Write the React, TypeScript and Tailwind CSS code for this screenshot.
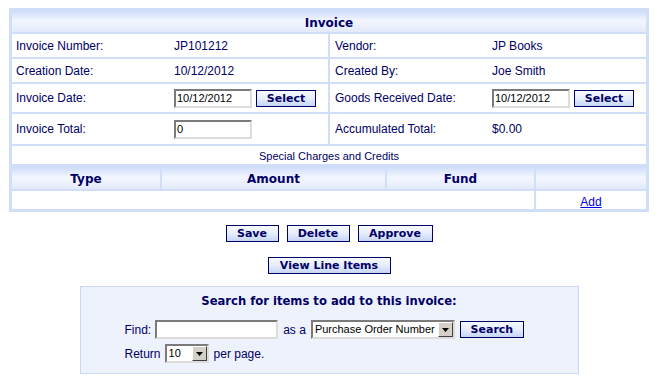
import React from "react";

const sans = { fontFamily: '"Liberation Sans", Arial, sans-serif' } as React.CSSProperties;
const bold = { fontFamily: '"DejaVu Sans", Verdana, sans-serif' } as React.CSSProperties;

function Btn({ children, w }: { children: React.ReactNode; w: string }) {
  return (
    <div
      style={bold}
      className={`${w} h-[17px] border border-[#000066] bg-gradient-to-b from-[#f7f9ff] via-[#e6edfc] to-[#c6d5f6] flex items-center justify-center text-[11px] font-bold text-[#000066] leading-none`}
    >
      {children}
    </div>
  );
}

function TextBox({ value, w }: { value: string; w: string }) {
  return (
    <div
      style={sans}
      className={`${w} h-[19px] bg-white border-2 border-t-[#7b7b7b] border-l-[#7b7b7b] border-b-[#dcdcdc] border-r-[#dcdcdc] flex items-center pl-[1px] text-[11px] text-black leading-none`}
    >
      {value}
    </div>
  );
}

function SelectBox({ value, w }: { value: string; w: string }) {
  return (
    <div
      style={sans}
      className={`${w} h-[19px] bg-white border-2 border-t-[#7b7b7b] border-l-[#7b7b7b] border-b-[#dcdcdc] border-r-[#dcdcdc] flex items-center text-[11px] text-black leading-none`}
    >
      <div className="flex-1 pl-[2px] whitespace-nowrap overflow-hidden">{value}</div>
      <div className="w-[15px] h-full bg-[#d4d0c8] border border-t-white border-l-white border-b-[#404040] border-r-[#404040] flex items-center justify-center">
        <svg width="7" height="4" viewBox="0 0 7 4">
          <path d="M0 0H7L3.5 4Z" fill="#000" />
        </svg>
      </div>
    </div>
  );
}

const hdrGrad = "bg-gradient-to-b from-[#cbdaf8] via-[#f3f6fe] to-[#e2eafb]";

export default function App() {
  const rows: { l1: string; v1: React.ReactNode; l2: string; v2: React.ReactNode; h: string }[] = [
    { l1: "Invoice Number:", v1: "JP101212", l2: "Vendor:", v2: "JP Books", h: "h-[23px]" },
    { l1: "Creation Date:", v1: "10/12/2012", l2: "Created By:", v2: "Joe Smith", h: "h-[23px]" },
    {
      l1: "Invoice Date:",
      v1: (
        <div className="flex items-center gap-[4px]">
          <TextBox value="10/12/2012" w="w-[78px]" />
          <Btn w="w-[60px]">Select</Btn>
        </div>
      ),
      l2: "Goods Received Date:",
      v2: (
        <div className="flex items-center gap-[4px]">
          <TextBox value="10/12/2012" w="w-[78px]" />
          <Btn w="w-[60px]">Select</Btn>
        </div>
      ),
      h: "h-[28px]",
    },
    {
      l1: "Invoice Total:",
      v1: <TextBox value="0" w="w-[78px]" />,
      l2: "Accumulated Total:",
      v2: "$0.00",
      h: "h-[30px]",
    },
  ];

  return (
    <div className="bg-white w-[664px] h-[392px] pl-[9px] pt-[8px]" style={sans}>
      <div className="w-[640px] flex flex-col items-center">
        {/* Invoice table */}
        <div className="w-[640px] bg-[#d1def9] px-[3px] pt-[2px] pb-[3px] flex flex-col gap-[2px]">
          <div
            style={bold}
            className={`h-[22px] ${hdrGrad} flex items-center justify-center pt-[3px] text-[12px] font-bold text-[#000066]`}
          >
            Invoice
          </div>
          {rows.map((r, i) => (
            <div key={i} className={`grid grid-cols-[316px_316px] gap-[2px] ${r.h}`}>
              <div className="bg-white flex items-center pl-[4px] text-[12px] text-[#000066]">
                <div className="w-[158px]">{r.l1}</div>
                <div>{r.v1}</div>
              </div>
              <div className="bg-white flex items-center pl-[5px] text-[12px] text-[#000066]">
                <div className="w-[157px]">{r.l2}</div>
                <div>{r.v2}</div>
              </div>
            </div>
          ))}
          <div className="h-[18px] bg-white flex items-center justify-center pt-[2px] text-[11px] text-[#000066]">
            Special Charges and Credits
          </div>
          <div className="grid grid-cols-[148px_223px_147px_110px] gap-[2px]">
            {["Type", "Amount", "Fund", ""].map((t, i) => (
              <div
                key={i}
                style={bold}
                className={`h-[23px] ${hdrGrad} flex items-center justify-center pt-[2px] text-[12px] font-bold text-[#000066]`}
              >
                {t}
              </div>
            ))}
            <div className="h-[18px] bg-white col-span-3" />
            <div className="h-[18px] bg-white flex items-center justify-center pt-[3px] text-[12px]">
              <span className="text-[#0000ee] underline">Add</span>
            </div>
          </div>
        </div>

        {/* Action buttons */}
        <div className="mt-[13px] flex items-center gap-[8px]">
          <Btn w="w-[53px]">Save</Btn>
          <Btn w="w-[63px]">Delete</Btn>
          <Btn w="w-[75px]">Approve</Btn>
        </div>
        <div className="mt-[15px]">
          <Btn w="w-[123px]">View Line Items</Btn>
        </div>

        {/* Search box */}
        <div className="mt-[12px] w-[499px] h-[88px] bg-[#eef2fd] border border-[#c9d8f6] flex flex-col pt-[6px]">
          <div
            style={bold}
            className="h-[17px] flex items-center justify-center text-[11.6px] font-bold text-[#000066]"
          >
            Search for items to add to this invoice:
          </div>
          <div className="mt-[10px] pl-[44px] flex items-center h-[19px] text-[12px] text-[#000066]">
            <span>Find:</span>
            <div className="ml-[4px]">
              <TextBox value="" w="w-[123px]" />
            </div>
            <span className="ml-[5px]">as a</span>
            <div className="ml-[5px]">
              <SelectBox value="Purchase Order Number" w="w-[144px]" />
            </div>
            <div className="ml-[5px]">
              <Btn w="w-[64px]">Search</Btn>
            </div>
          </div>
          <div className="mt-[5px] pl-[44px] flex items-center h-[19px] text-[12px] text-[#000066]">
            <span>Return</span>
            <div className="ml-[4px]">
              <SelectBox value="10" w="w-[44px]" />
            </div>
            <span className="ml-[5px]">per page.</span>
          </div>
        </div>
      </div>
    </div>
  );
}
